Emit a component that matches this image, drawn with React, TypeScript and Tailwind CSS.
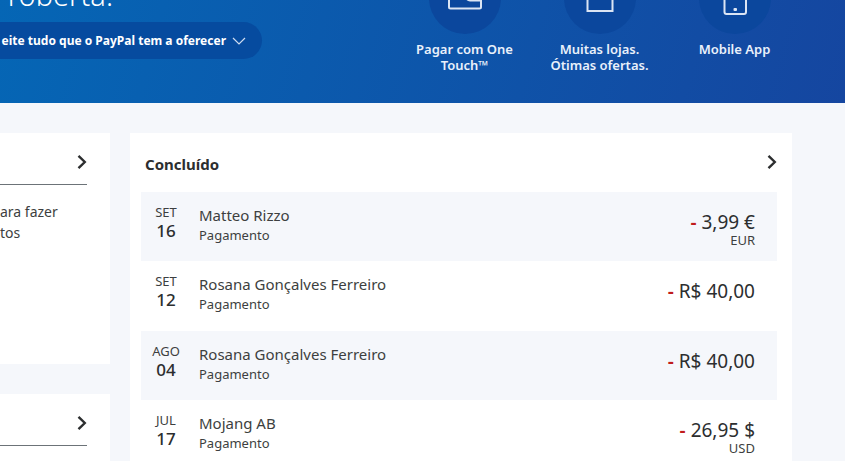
import type { ReactNode } from "react";

type Payment = {
  month: string;
  day: string;
  name: string;
  amount: string;
  currency?: string;
};

const payments: Payment[] = [
  { month: "SET", day: "16", name: "Matteo Rizzo", amount: "3,99 €", currency: "EUR" },
  { month: "SET", day: "12", name: "Rosana Gonçalves Ferreiro", amount: "R$ 40,00" },
  { month: "AGO", day: "04", name: "Rosana Gonçalves Ferreiro", amount: "R$ 40,00" },
  { month: "JUL", day: "17", name: "Mojang AB", amount: "26,95 $", currency: "USD" },
];

function Chevron() {
  return (
    <svg width="10" height="16" viewBox="0 0 10 16" fill="none" stroke="#2c2e2f" strokeWidth="2.4" aria-hidden="true">
      <path d="M1.5 1.8 7.8 8l-6.3 6.2" />
    </svg>
  );
}

// The lower part of each icon peeks out below the top edge of the header.
function WalletIcon() {
  return (
    <svg width="36" height="36" viewBox="0 0 36 36" fill="none" stroke="#dbe5f4" strokeWidth="2" aria-hidden="true">
      <path d="M2 8v19a1.5 1.5 0 0 0 1.5 1.5h29A1.5 1.5 0 0 0 34 27V8a2 2 0 0 0-2-2H4a2 2 0 0 0-2 2Z" />
      <path d="M34 20.5H23a4 4 0 0 1 0-8h11" />
    </svg>
  );
}

function BagIcon() {
  return (
    <svg width="36" height="36" viewBox="0 0 36 36" fill="none" stroke="#dbe5f4" strokeWidth="2" aria-hidden="true">
      <path d="M5.5 9h25v22h-25z" />
      <path d="M12 13V7a6 6 0 0 1 12 0v6" />
    </svg>
  );
}

function PhoneIcon() {
  return (
    <svg width="36" height="36" viewBox="0 0 36 36" fill="none" stroke="#dbe5f4" strokeWidth="2" aria-hidden="true">
      <rect x="7.5" y="-4" width="21.5" height="38" rx="2" />
      <rect x="16.5" y="28" width="3.5" height="3" rx="1" fill="#dbe5f4" stroke="none" />
    </svg>
  );
}

function Feature({ icon, children }: { icon: ReactNode; children: ReactNode }) {
  return (
    <a href="#" className="flex w-[135px] flex-col items-center text-center text-[13px] leading-4 font-semibold text-[#eaf1fb]">
      <span className="mb-[7px] flex size-[72px] items-center justify-center rounded-full bg-[#0b479d]">{icon}</span>
      {children}
    </a>
  );
}

function SideCard({ children, className }: { children?: ReactNode; className: string }) {
  return (
    <section className={`overflow-hidden bg-white pr-[23px] ${className}`}>
      <a href="#" aria-label="Mais" className="flex h-[52px] items-center justify-end border-b border-[#6c7378] pt-[7px]">
        <Chevron />
      </a>
      {children}
    </section>
  );
}

function PaymentRow({ p }: { p: Payment }) {
  return (
    <li className="flex px-[10px] pt-3 pr-[22px] odd:bg-[#f5f7fb]">
      <div className="w-[30px] text-center">
        <div className="text-[13px] leading-[17px] text-[#3d3f40]">{p.month}</div>
        <div className="text-[17px] leading-5 font-medium">{p.day}</div>
      </div>
      <div className="ml-[18px] flex-1 text-[#3d3f40]">
        <div className="text-[15px] leading-[22px]">{p.name}</div>
        <div className="text-[13px] leading-[18px]">Pagamento</div>
      </div>
      <div className="pt-2 text-right">
        <div className="text-[19px] leading-5">
          <span className="font-semibold text-[#c01c1c]">-</span> {p.amount}
        </div>
        {p.currency && <div className="text-[13px] leading-[17px] text-[#3d3f40]">{p.currency}</div>}
      </div>
    </li>
  );
}

export default function App() {
  return (
    <div className="flex h-screen flex-col overflow-hidden bg-[#f5f7fb] font-['Noto_Sans',sans-serif] text-[#2c2e2f]">
      <header className="flex h-[103px] shrink-0 justify-between overflow-hidden bg-linear-[105deg] from-[#0566b5] to-[#1546a0] pr-[43px] text-white">
        <div className="flex w-[262px] flex-col justify-end pb-11">
          <h1 className="mb-[7px] flex w-[113px] justify-end text-[29px] leading-10 font-light whitespace-nowrap">roberta.</h1>
          <button className="flex h-[37px] shrink-0 items-center justify-end gap-[6px] rounded-r-full bg-[#064b9f] pr-4 text-[12px] font-bold whitespace-nowrap">
            eite tudo que o PayPal tem a oferecer
            <svg className="shrink-0" width="14" height="8" viewBox="0 0 14 8" fill="none" stroke="#cfdcf0" strokeWidth="1.2" aria-hidden="true">
              <path d="M1 1l6 6 6-6" />
            </svg>
          </button>
        </div>
        <nav className="-mt-[38px] flex">
          <Feature icon={<WalletIcon />}>
            <span>Pagar com One</span>
            <span>Touch™</span>
          </Feature>
          <Feature icon={<BagIcon />}>
            <span>Muitas lojas.</span>
            <span>Ótimas ofertas.</span>
          </Feature>
          <Feature icon={<PhoneIcon />}>
            <span>Mobile App</span>
          </Feature>
        </nav>
      </header>

      <main className="flex min-h-0 flex-1 gap-5 pt-[30px] pr-[53px]">
        <aside className="flex w-[110px] shrink-0 flex-col gap-[30px]">
          <SideCard className="h-[231px] shrink-0">
            <p className="pt-4 text-[14px] leading-[21px] text-[#3d3f40]">
              ara fazer
              <br />
              tos
            </p>
          </SideCard>
          <SideCard className="flex-1" />
        </aside>

        <section className="flex-1 bg-white pr-[15px] pl-[11px]">
          <div className="flex h-[59px] items-start justify-between pt-[21px] pl-1">
            <h2 className="text-[15px] leading-5 font-bold">Concluído</h2>
            <a href="#" aria-label="Ver tudo">
              <Chevron />
            </a>
          </div>
          <ul className="grid h-[277px] auto-rows-fr">
            {payments.map((p, i) => (
              <PaymentRow key={i} p={p} />
            ))}
          </ul>
        </section>
      </main>
    </div>
  );
}
